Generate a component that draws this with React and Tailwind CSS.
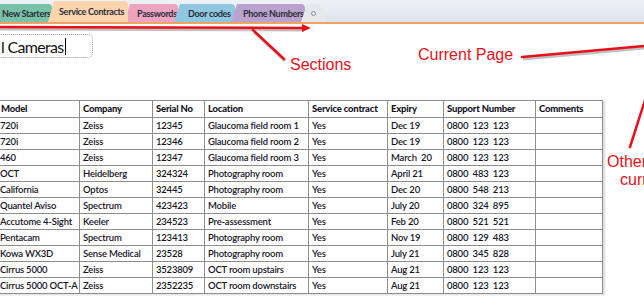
import React from "react";

const tabs = [
    {name: "New Starters", w: "w-[58px]", bg: "bg-[#79c2aa]", pl: "pl-[8px]", ml: "ml-[-6px]"},
    {name: "Service Contracts", w: "w-[80px]", bg: "bg-[#fcd4ae]", pl: "pl-[11px]", active: true},
    {name: "Passwords", w: "w-[54px]", bg: "bg-[#eda4c1]", pl: "pl-[13px]"},
    {name: "Door codes", w: "w-[61px]", bg: "bg-[#8fc7df]", pl: "pl-[14px]"},
    {name: "Phone Numbers", w: "w-[74px]", bg: "bg-[#b9a3cd]", pl: "pl-[12px]"},
];

const rows = [
    ["720i", "Zeiss", "12345", "Glaucoma field room 1", "Yes", "Dec 19", "0800  123  123"],
    ["720i", "Zeiss", "12346", "Glaucoma field room 2", "Yes", "Dec 19", "0800  123  123"],
    ["460", "Zeiss", "12347", "Glaucoma field room 3", "Yes", "March  20", "0800  123  123"],
    ["OCT", "Heidelberg", "324324", "Photography room", "Yes", "April 21", "0800  483  123"],
    ["California", "Optos", "32445", "Photography room", "Yes", "Dec 20", "0800  548  213"],
    ["Quantel Aviso", "Spectrum", "423423", "Mobile", "Yes", "July 20", "0800  324  895"],
    ["Accutome 4-Sight", "Keeler", "234523", "Pre-assessment", "Yes", "Feb 20", "0800  521  521"],
    ["Pentacam", "Spectrum", "123413", "Photography room", "Yes", "Nov 19", "0800  129  483"],
    ["Kowa WX3D", "Sense Medical", "23528", "Photography room", "Yes", "July 21", "0800  345  828"],
    ["Cirrus 5000", "Zeiss", "3523809", "OCT room upstairs", "Yes", "Aug 21", "0800  123  123"],
    ["Cirrus 5000 OCT-A", "Zeiss", "2352235", "OCT room downstairs", "Yes", "Aug 21", "0800  123  123"],
];

const heads = ["Model", "Company", "Serial No", "Location", "Service contract", "Expiry", "Support Number", "Comments"];
const widths = ["w-[84px]", "w-[73px]", "w-[52px]", "w-[104px]", "w-[79px]", "w-[56px]", "w-[92px]", "w-[67px]"];

const Tab = ({tab}) => (
    <div
        className={`${tab.w} ${tab.bg} ${tab.ml || "ml-[-4px]"} ${tab.pl} ${tab.active ? "h-[21px] z-10 pt-[5px]" : "h-[18px] pt-[4px]"}
        shrink-0 rounded-tr-[4px] text-[9px] leading-[11px] font-bold tracking-[-0.3px] text-[#2b2b36] whitespace-nowrap
        [clip-path:polygon(0_100%,6px_0,100%_0,100%_100%)]`}
    >{tab.name}</div>
);

const App = () => {
    return (
        <div className="relative w-[644px] h-[304px] overflow-hidden bg-white font-['Lato',sans-serif]">
            <div className="h-[24px] bg-gradient-to-b from-[#eef2f7] to-[#dde4ec] border-b-2 border-[#f0a362] flex items-end">
                {tabs.map(t => <Tab key={t.name} tab={t}/>)}
                <div className="ml-[-4px] w-[26px] h-[18px] bg-[#e6e8ec] shrink-0 flex items-center justify-center
                    [clip-path:polygon(0_100%,6px_0,70%_0,100%_100%)]">
                    <span className="w-[5px] h-[5px] rounded-full border border-[#8a8f99] ml-[-2px]"></span>
                </div>
            </div>

            <div className="mt-[10px] ml-[-8px] w-[101px] h-[24px] rounded-[5px] border border-dotted border-[#9a9a9a] pl-[8px] flex items-center">
                <span className="text-[16px] leading-none tracking-[-0.7px] text-[#111] pt-[1px]">l Cameras</span>
                <span className="w-px h-[17px] bg-black ml-[2px]"></span>
            </div>

            <table className="mt-[42px] ml-[-5px] w-[607px] table-fixed border-collapse text-[9.5px] font-semibold tracking-[-0.2px] text-[#15151f] leading-none shadow-[2px_1px_2px_rgba(0,0,0,0.15)]">
                <thead>
                    <tr className="h-[17px]">
                        {heads.map((h, i) => (
                            <th key={h} className={`${widths[i]} border border-[#8e8e8e] text-left font-black px-[3px] whitespace-nowrap overflow-hidden ${i === 0 ? "pl-[5px]" : ""}`}>{h}</th>
                        ))}
                    </tr>
                </thead>
                <tbody>
                    {rows.map((r, ri) => (
                        <tr key={ri} className="h-[16px]">
                            {r.map((c, i) => (
                                <td key={i} className={`border border-[#8e8e8e] px-[3px] whitespace-pre overflow-hidden ${i === 0 ? "pl-[4px] pr-0" : ""}`}>{c}</td>
                            ))}
                            <td className="border border-[#8e8e8e]"></td>
                        </tr>
                    ))}
                </tbody>
            </table>

            <svg className="absolute inset-0 pointer-events-none" width="644" height="304">
                <g stroke="rgba(0,0,0,0.25)" strokeWidth="3" fill="none">
                    <line x1="0" y1="29" x2="304" y2="30"/>
                    <line x1="254" y1="32" x2="285" y2="61"/>
                    <line x1="523" y1="59" x2="644" y2="48"/>
                </g>
                <g stroke="#e8101a" strokeWidth="2.5" fill="none" strokeLinecap="round">
                    <line x1="0" y1="27" x2="303" y2="28"/>
                    <line x1="253" y1="30" x2="284" y2="59"/>
                    <line x1="522" y1="57" x2="644" y2="46"/>
                    <line x1="630" y1="147" x2="646" y2="97"/>
                </g>
                <polygon points="302,24 311,28 302,32" fill="#e8101a"/>
            </svg>

            <span className="absolute left-[290px] top-[53px] text-[16px] text-[#e8101a] font-['Liberation_Sans',sans-serif]">Sections</span>
            <span className="absolute left-[418px] top-[43px] text-[16px] text-[#e8101a] font-['Liberation_Sans',sans-serif]">Current Page</span>
            <span className="absolute left-[607px] top-[153px] text-[16px] leading-[18px] text-[#e8101a] font-['Liberation_Sans',sans-serif] whitespace-nowrap">Other<br/><span className="ml-[13px]">curr</span></span>
        </div>
    );
};

export default App;
